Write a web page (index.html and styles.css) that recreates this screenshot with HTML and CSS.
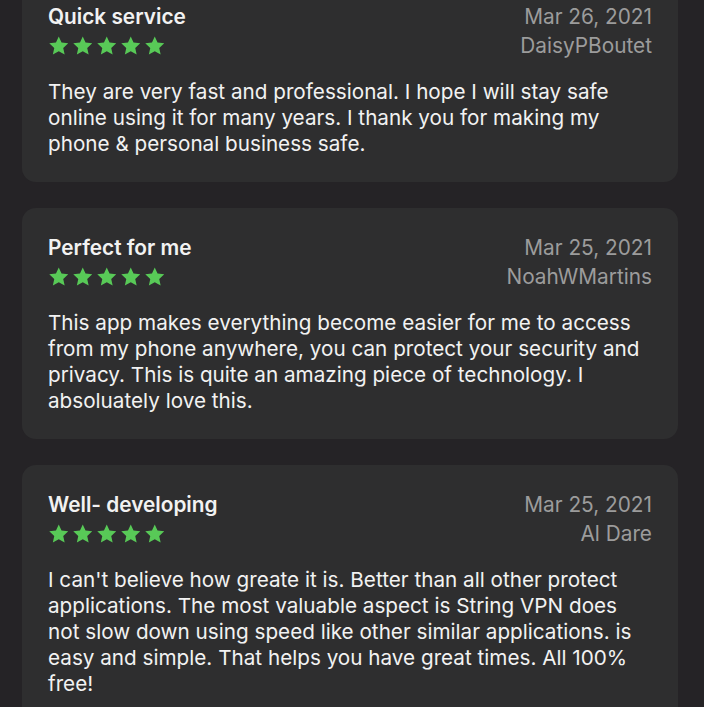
FILE: index.html
```html
<!DOCTYPE html>
<html>
<head>
<meta charset="utf-8">
<link rel="stylesheet" href="styles.css">
</head>
<body>
<svg width="0" height="0" style="position:absolute">
  <defs>
    <symbol id="star" viewBox="0 0 24 24">
      <path d="M12 1.6l3.1 6.9 7.5.8-5.6 5.1 1.6 7.4L12 18l-6.6 3.8 1.6-7.4-5.6-5.1 7.5-.8z"/>
    </symbol>
  </defs>
</svg>
<div class="list">
  <div class="card">
    <div class="head">
      <div class="left">
        <div class="title">Quick service</div>
        <div class="stars"><svg><use href="#star"/></svg><svg><use href="#star"/></svg><svg><use href="#star"/></svg><svg><use href="#star"/></svg><svg><use href="#star"/></svg></div>
      </div>
      <div class="right">
        <div class="meta">Mar 26, 2021</div>
        <div class="meta">DaisyPBoutet</div>
      </div>
    </div>
    <p class="body">They are very fast and professional. I hope I will stay safe online using it for many years. I thank you for making my phone &amp; personal business safe.</p>
  </div>
  <div class="card">
    <div class="head">
      <div class="left">
        <div class="title">Perfect for me</div>
        <div class="stars"><svg><use href="#star"/></svg><svg><use href="#star"/></svg><svg><use href="#star"/></svg><svg><use href="#star"/></svg><svg><use href="#star"/></svg></div>
      </div>
      <div class="right">
        <div class="meta">Mar 25, 2021</div>
        <div class="meta">NoahWMartins</div>
      </div>
    </div>
    <p class="body">This app makes everything become easier for me to access from my phone anywhere, you can protect your security and privacy. This is quite an amazing piece of technology. I absoluately love this.</p>
  </div>
  <div class="card">
    <div class="head">
      <div class="left">
        <div class="title">Well- developing</div>
        <div class="stars"><svg><use href="#star"/></svg><svg><use href="#star"/></svg><svg><use href="#star"/></svg><svg><use href="#star"/></svg><svg><use href="#star"/></svg></div>
      </div>
      <div class="right">
        <div class="meta">Mar 25, 2021</div>
        <div class="meta">Al Dare</div>
      </div>
    </div>
    <p class="body">I can't believe how greate it is. Better than all other protect applications. The most valuable aspect is String VPN does not slow down using speed like other similar applications. is easy and simple. That helps you have great times. All 100% free!</p>
  </div>
</div>
</body>
</html>
```
FILE: styles.css
```css
html, body {
  margin: 0;
  padding: 0;
  background: #252326;
  height: 100%;
  overflow: hidden;
}
body {
  font-family: Inter, "Noto Sans", sans-serif;
  color: #f2f2f2;
}
.list {
  display: flex;
  flex-direction: column;
  gap: 26px;
  margin-top: -23px;
  padding: 0 26px 0 22px;
}
.card {
  background: #2e2e2f;
  border-radius: 14px;
  padding: 25px 26px 25px 26px;
}
.head {
  display: flex;
  justify-content: space-between;
}
.title {
  font-size: 20.8px;
  font-weight: 600;
  line-height: 29px;
}
.stars {
  height: 29px;
  display: flex;
  align-items: center;
  gap: 2.5px;
}
.stars svg {
  width: 21.5px;
  height: 21.5px;
  fill: #58c957;
}
.right {
  display: flex;
  flex-direction: column;
  align-items: flex-end;
}
.meta {
  font-size: 20.8px;
  line-height: 29px;
  color: #9c9c9c;
}
.body {
  margin: 19px 0 0 0;
  font-size: 20.7px;
  line-height: 26px;
}
```
